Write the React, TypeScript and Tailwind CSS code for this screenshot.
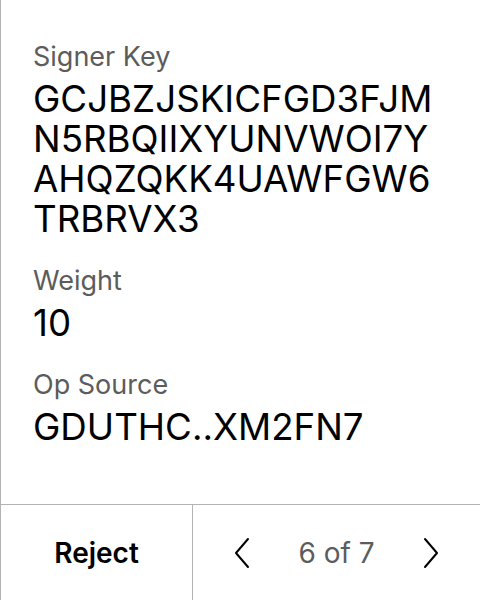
import React from "react";

const Field = ({ label, lines }: { label: string; lines: string[] }) => (
  <div className="flex flex-col">
    <div className="text-[27px] leading-[32px] text-[#5c5c5c]">{label}</div>
    <div className="mt-[6px] text-[36.7px] leading-[40px] text-black break-all">
      {lines.map((l, i) => (
        <div key={i}>{l}</div>
      ))}
    </div>
  </div>
);

export default function App() {
  return (
    <div
      className="w-[480px] h-[600px] bg-white border-l border-[#b3b3b3] flex flex-col"
      style={{ fontFamily: "Inter, 'Noto Sans', sans-serif" }}
    >
      <div className="flex-1 flex flex-col gap-[26px] pl-[32px] pr-[12px] pt-[41px]">
        <Field
          label="Signer Key"
          lines={["GCJBZJSKICFGD3FJM", "N5RBQIIXYUNVWOI7Y", "AHQZQKK4UAWFGW6", "TRBRVX3"]}
        />
        <Field label="Weight" lines={["10"]} />
        <Field label="Op Source" lines={["GDUTHC..XM2FN7"]} />
      </div>
      <div className="h-[96px] border-t border-[#b3b3b3] flex">
        <div className="w-[192px] border-r border-[#b3b3b3] flex items-center justify-center">
          <span className="text-[28px] font-semibold text-black">Reject</span>
        </div>
        <div className="flex-1 flex items-center justify-between px-[41px]">
          <svg width="16" height="32" viewBox="0 0 16 32" fill="none" stroke="black" strokeWidth="2" strokeLinecap="round" strokeLinejoin="round">
            <polyline points="14,2 2,16 14,30" />
          </svg>
          <span className="text-[28px] text-[#5c5c5c]">6 of 7</span>
          <svg width="16" height="32" viewBox="0 0 16 32" fill="none" stroke="black" strokeWidth="2" strokeLinecap="round" strokeLinejoin="round">
            <polyline points="2,2 14,16 2,30" />
          </svg>
        </div>
      </div>
    </div>
  );
}
